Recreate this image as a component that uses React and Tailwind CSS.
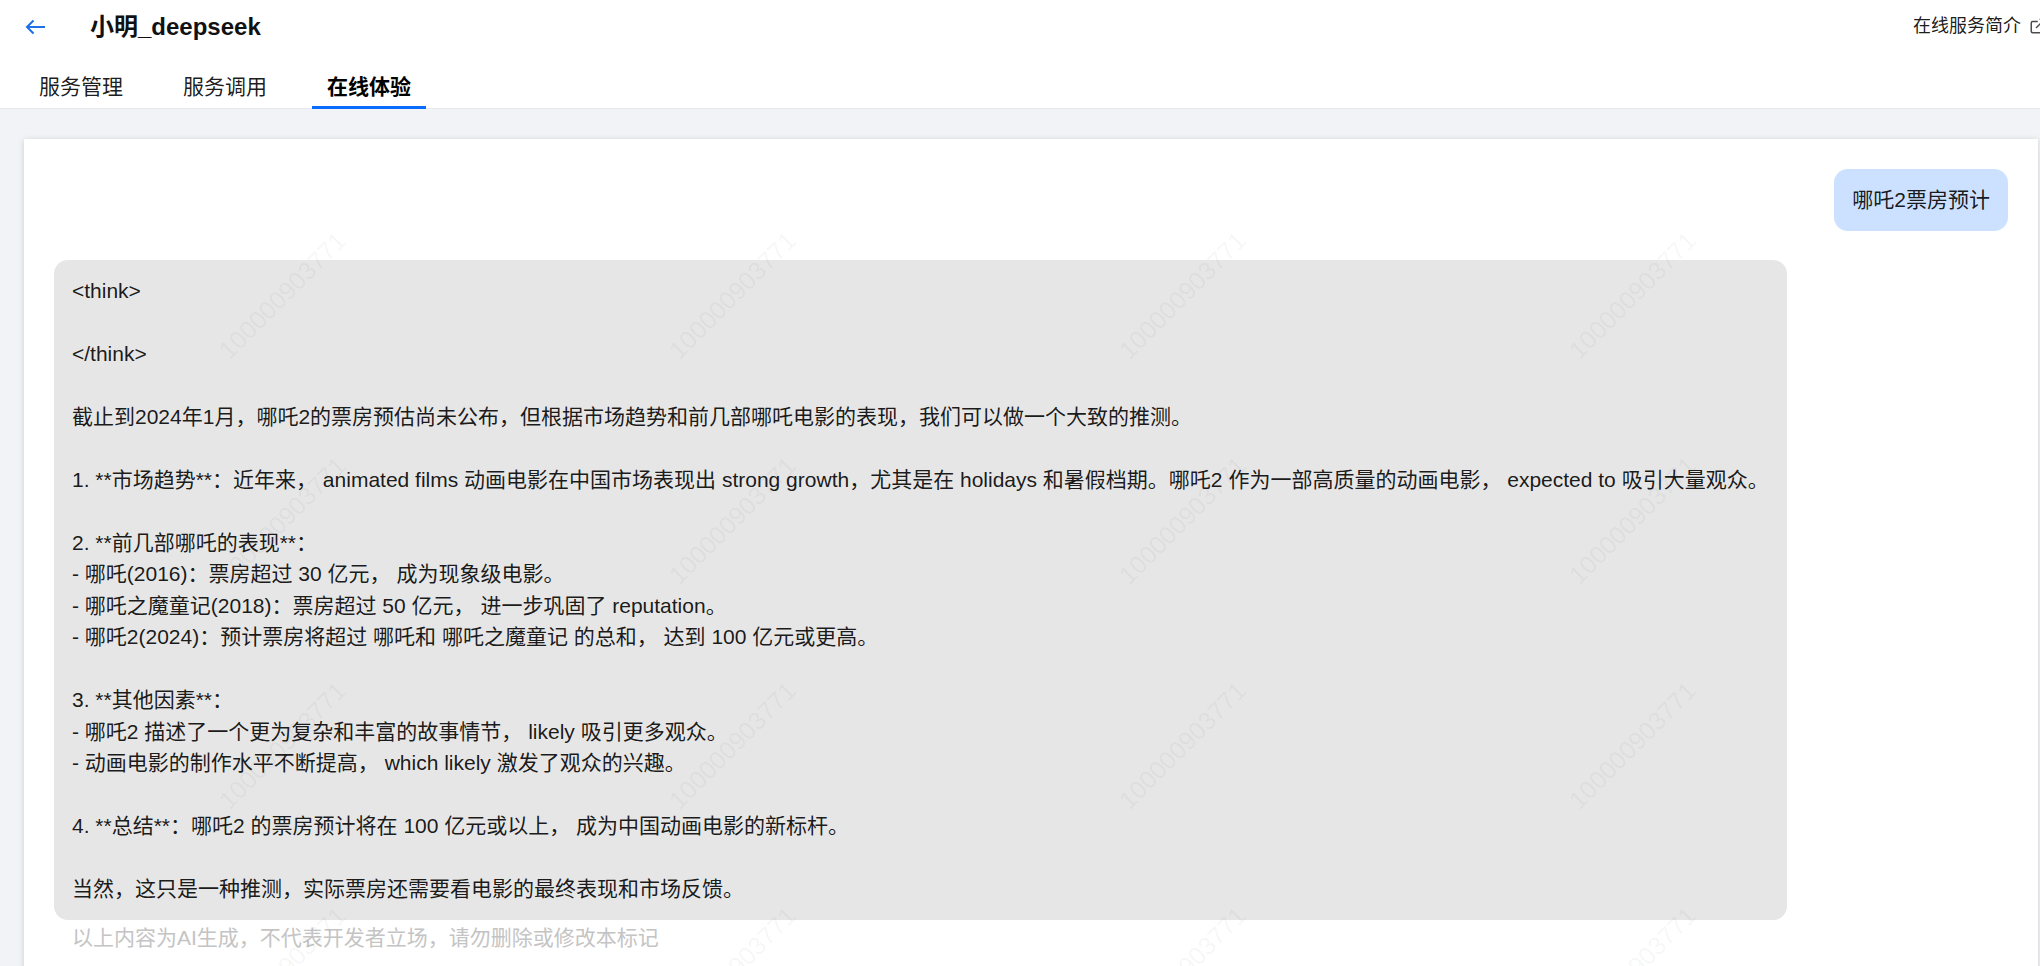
import React from 'react';
import { ExternalLink } from 'lucide-react';

const lines = [
  '<think>',
  '',
  '</think>',
  '',
  '截止到2024年1月，哪吒2的票房预估尚未公布，但根据市场趋势和前几部哪吒电影的表现，我们可以做一个大致的推测。',
  '',
  '1. **市场趋势**：近年来， animated films 动画电影在中国市场表现出 strong growth，尤其是在 holidays 和暑假档期。哪吒2 作为一部高质量的动画电影， expected to 吸引大量观众。',
  '',
  '2. **前几部哪吒的表现**：',
  '- 哪吒(2016)：票房超过 30 亿元， 成为现象级电影。',
  '- 哪吒之魔童记(2018)：票房超过 50 亿元， 进一步巩固了 reputation。',
  '- 哪吒2(2024)：预计票房将超过 哪吒和 哪吒之魔童记 的总和， 达到 100 亿元或更高。',
  '',
  '3. **其他因素**：',
  '- 哪吒2 描述了一个更为复杂和丰富的故事情节， likely 吸引更多观众。',
  '- 动画电影的制作水平不断提高， which likely 激发了观众的兴趣。',
  '',
  '4. **总结**：哪吒2 的票房预计将在 100 亿元或以上， 成为中国动画电影的新标杆。',
  '',
  '当然，这只是一种推测，实际票房还需要看电影的最终表现和市场反馈。',
];

const tabs = ['服务管理', '服务调用', '在线体验'];

function Watermark() {
  const cells = Array.from({ length: 20 });
  return (
    <div className="pointer-events-none absolute inset-0 overflow-hidden">
      <div className="flex w-[2250px] flex-wrap pt-[44px] pl-[33px]">
        {cells.map((_, i) => (
          <div key={i} className="flex h-[225px] w-[450px] items-center justify-center">
            <span className="block w-[225px] -rotate-45 text-center text-[25px] leading-none whitespace-nowrap text-black/[0.05]">100000903771</span>
          </div>
        ))}
      </div>
    </div>
  );
}

export default function App() {
  return (
    <div className="h-[966px] w-full overflow-hidden bg-[#f1f3f7] font-['Liberation_Sans','Noto_Sans_CJK_SC',sans-serif] text-[21px] text-black/90">
      {/* Header */}
      <header className="h-[109px] border-b border-[#e5e8ee] bg-white">
        <div className="flex h-[54px] items-center pl-[25px]">
          <svg width="21" height="16" viewBox="0 0 21 16" fill="none" stroke="#1f6fe5" strokeWidth="2" className="shrink-0">
            <path d="M2 8H20M8.5 1.5L2 8l6.5 6.5" />
          </svg>
          <h1 className="ml-[44px] text-[24px] leading-none font-bold text-[#111]">小明_deepseek</h1>
          <div className="mr-[-7px] ml-auto flex items-center gap-[8px] pb-[2px] text-[18px] text-black/90">
            <span>在线服务简介</span>
            <ExternalLink className="h-[18px] w-[18px] shrink-0 text-black/70" strokeWidth={2} />
          </div>
        </div>
        {/* Tabs */}
        <nav className="flex gap-[28px] pl-[23px]">
          {tabs.map((t, i) => (
            <div
              key={t}
              className={`h-[55px] border-b-[3px] pt-[17px] text-[21px] leading-[32px] ${i === 2 ? 'ml-[1px] border-[#0a6cff] px-[15px] font-bold text-black' : 'border-transparent px-[16px] text-black/90'}`}
            >
              {t}
            </div>
          ))}
        </nav>
      </header>

      {/* Chat card */}
      <div className="pt-[30px] pr-[2px] pl-[24px]">
        <main className="relative h-[900px] bg-white p-[30px] shadow-[0_1px_6px_rgba(0,0,0,0.15)]">
          <div className="flex justify-end">
            <div className="rounded-[14px] bg-[#cce0ff] px-[18px] py-[15px] leading-[31.5px]">哪吒2票房预计</div>
          </div>
          <div className="mt-[29px] w-[1733px] rounded-[14px] bg-[#e6e6e6] px-[18px] py-[15px] leading-[31.5px] whitespace-pre-wrap">
            {lines.map((l, i) => (
              <div key={i} className="h-[31.5px]">{l}</div>
            ))}
          </div>
          <div className="px-[18px] pt-[2px] leading-[31.5px] text-[#c4c4c4]">以上内容为AI生成，不代表开发者立场，请勿删除或修改本标记</div>
          <Watermark />
        </main>
      </div>
    </div>
  );
}
